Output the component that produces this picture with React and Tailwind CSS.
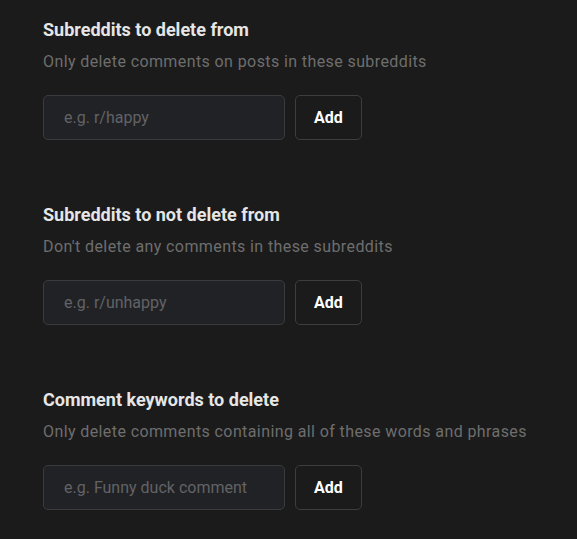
import React from 'react';

const sections = [
  {
    title: 'Subreddits to delete from',
    hint: 'Only delete comments on posts in these subreddits',
    placeholder: 'e.g. r/happy',
  },
  {
    title: 'Subreddits to not delete from',
    hint: "Don't delete any comments in these subreddits",
    placeholder: 'e.g. r/unhappy',
  },
  {
    title: 'Comment keywords to delete',
    hint: 'Only delete comments containing all of these words and phrases',
    placeholder: 'e.g. Funny duck comment',
  },
];

const App = () => {
  return (
    <div className="min-h-screen bg-[#1b1b1b] pl-[43px] pt-[18px] font-['Roboto',sans-serif]">
      {sections.map((s, i) => (
        <div key={i} className={i > 0 ? 'mt-[63px]' : ''}>
          <h2 className="text-lg leading-6 font-bold text-[#e6e6e6]">{s.title}</h2>
          <p className="mt-2 text-base leading-6 tracking-[0.4px] text-[#6e6e6e]">{s.hint}</p>
          <div className="mt-[21px] flex gap-[10px]">
            <input
              type="text"
              placeholder={s.placeholder}
              className="h-[45px] w-[242px] rounded-[5px] border border-[#3a3b3e] bg-[#212225] px-5 text-base text-[#e6e6e6] placeholder:text-[#626366] outline-none"
            />
            <button className="h-[45px] w-[67px] rounded-[5px] border border-[#3d3d3f] bg-[#1b1b1b] text-base font-bold text-white">
              Add
            </button>
          </div>
        </div>
      ))}
    </div>
  );
};

export default App;
